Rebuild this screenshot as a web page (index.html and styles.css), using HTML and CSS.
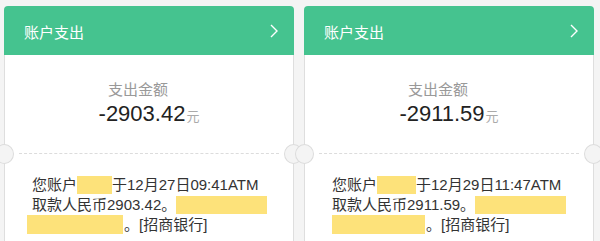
FILE: index.html
```html
<!DOCTYPE html>
<html lang="zh-CN">
<head>
    <meta charset="UTF-8">
    <meta name="viewport" content="width=device-width, initial-scale=1.0">
    <title>账户支出</title>
    <link rel="stylesheet" href="styles.css">
</head>
<body>
    <div class="list">
        <div class="card">
            <div class="card-head">
                <span class="card-title">账户支出</span>
                <svg class="chevron" width="8" height="14" viewBox="0 0 8 14"><polyline points="1,1 7,7 1,13"/></svg>
            </div>
            <div class="card-body">
                <div class="summary">
                    <div class="label">支出金额</div>
                    <div class="amount">-2903.42<span class="unit">元</span></div>
                </div>
                <div class="divider"></div>
                <div class="message">
                    您账户<span class="mask mask-short"></span>于12月27日09:41ATM<br>
                    取款人民币2903.42。<span class="mask mask-long"></span><br>
                    <span class="mask mask-line mask-out"></span>。[招商银行]
                </div>
            </div>
        </div>
        <div class="card">
            <div class="card-head">
                <span class="card-title">账户支出</span>
                <svg class="chevron" width="8" height="14" viewBox="0 0 8 14"><polyline points="1,1 7,7 1,13"/></svg>
            </div>
            <div class="card-body">
                <div class="summary">
                    <div class="label">支出金额</div>
                    <div class="amount">-2911.59<span class="unit">元</span></div>
                </div>
                <div class="divider"></div>
                <div class="message">
                    您账户<span class="mask mask-short wide"></span>于12月29日11:47ATM<br>
                    取款人民币2911.59。<span class="mask mask-long"></span><br>
                    <span class="mask mask-line"></span>。[招商银行]
                </div>
            </div>
        </div>
    </div>
</body>
</html>
```

FILE: styles.css
```css
body {
    margin: 0;
    background-color: #f4f4f4;
    font-family: "Liberation Sans", "Noto Sans CJK SC", sans-serif;
    color: #333;
    overflow: hidden;
}
.list {
    display: flex;
    gap: 10px;
    padding: 6px 6px 0 4px;
}
.card {
    width: 290px;
    flex: none;
}
.card-head {
    height: 49px;
    background-color: #45c38f;
    border-radius: 4px 4px 0 0;
    display: flex;
    align-items: center;
    justify-content: space-between;
    padding: 0 16px 0 20px;
    color: #fff;
}
.card-title {
    font-size: 15px;
    margin-top: 2px;
}
.chevron polyline {
    fill: none;
    stroke: #fff;
    stroke-width: 1.4;
}
.card-body {
    background: #fff;
    border: 1px solid #dedede;
    border-top: none;
    border-bottom: none;
    height: 186px;
}
.summary {
    padding-top: 24px;
    text-align: center;
}
.label {
    font-size: 15px;
    line-height: 21px;
    color: #999;
    padding-right: 22px;
}
.amount {
    font-size: 22px;
    line-height: 28px;
    color: #222;
}
.unit {
    font-size: 13px;
    color: #aaa;
    margin-left: 1px;
}
.divider {
    position: relative;
    margin: 22px 14px 0;
    border-top: 1px dashed #dcdcdc;
}
.divider::before,
.divider::after {
    content: "";
    position: absolute;
    top: -10px;
    width: 17px;
    height: 18px;
    border: 1px solid #dcdcdc;
    border-radius: 50%;
    background: #f4f4f4;
}
.divider::before {
    left: -24px;
}
.divider::after {
    right: -24px;
}
.message {
    padding: 21px 0 0 27px;
    font-size: 15px;
    line-height: 20px;
    white-space: nowrap;
}
.mask {
    display: inline-block;
    height: 18px;
    vertical-align: -4px;
    background-color: #fde27a;
}
.mask-short {
    width: 35px;
}
.mask-short.wide {
    width: 39px;
}
.mask-long {
    width: 91px;
}
.mask-line {
    width: 93px;
    height: 19px;
    margin-right: 1px;
}
.mask-out {
    margin-left: -5px;
    width: 96px;
}
```
